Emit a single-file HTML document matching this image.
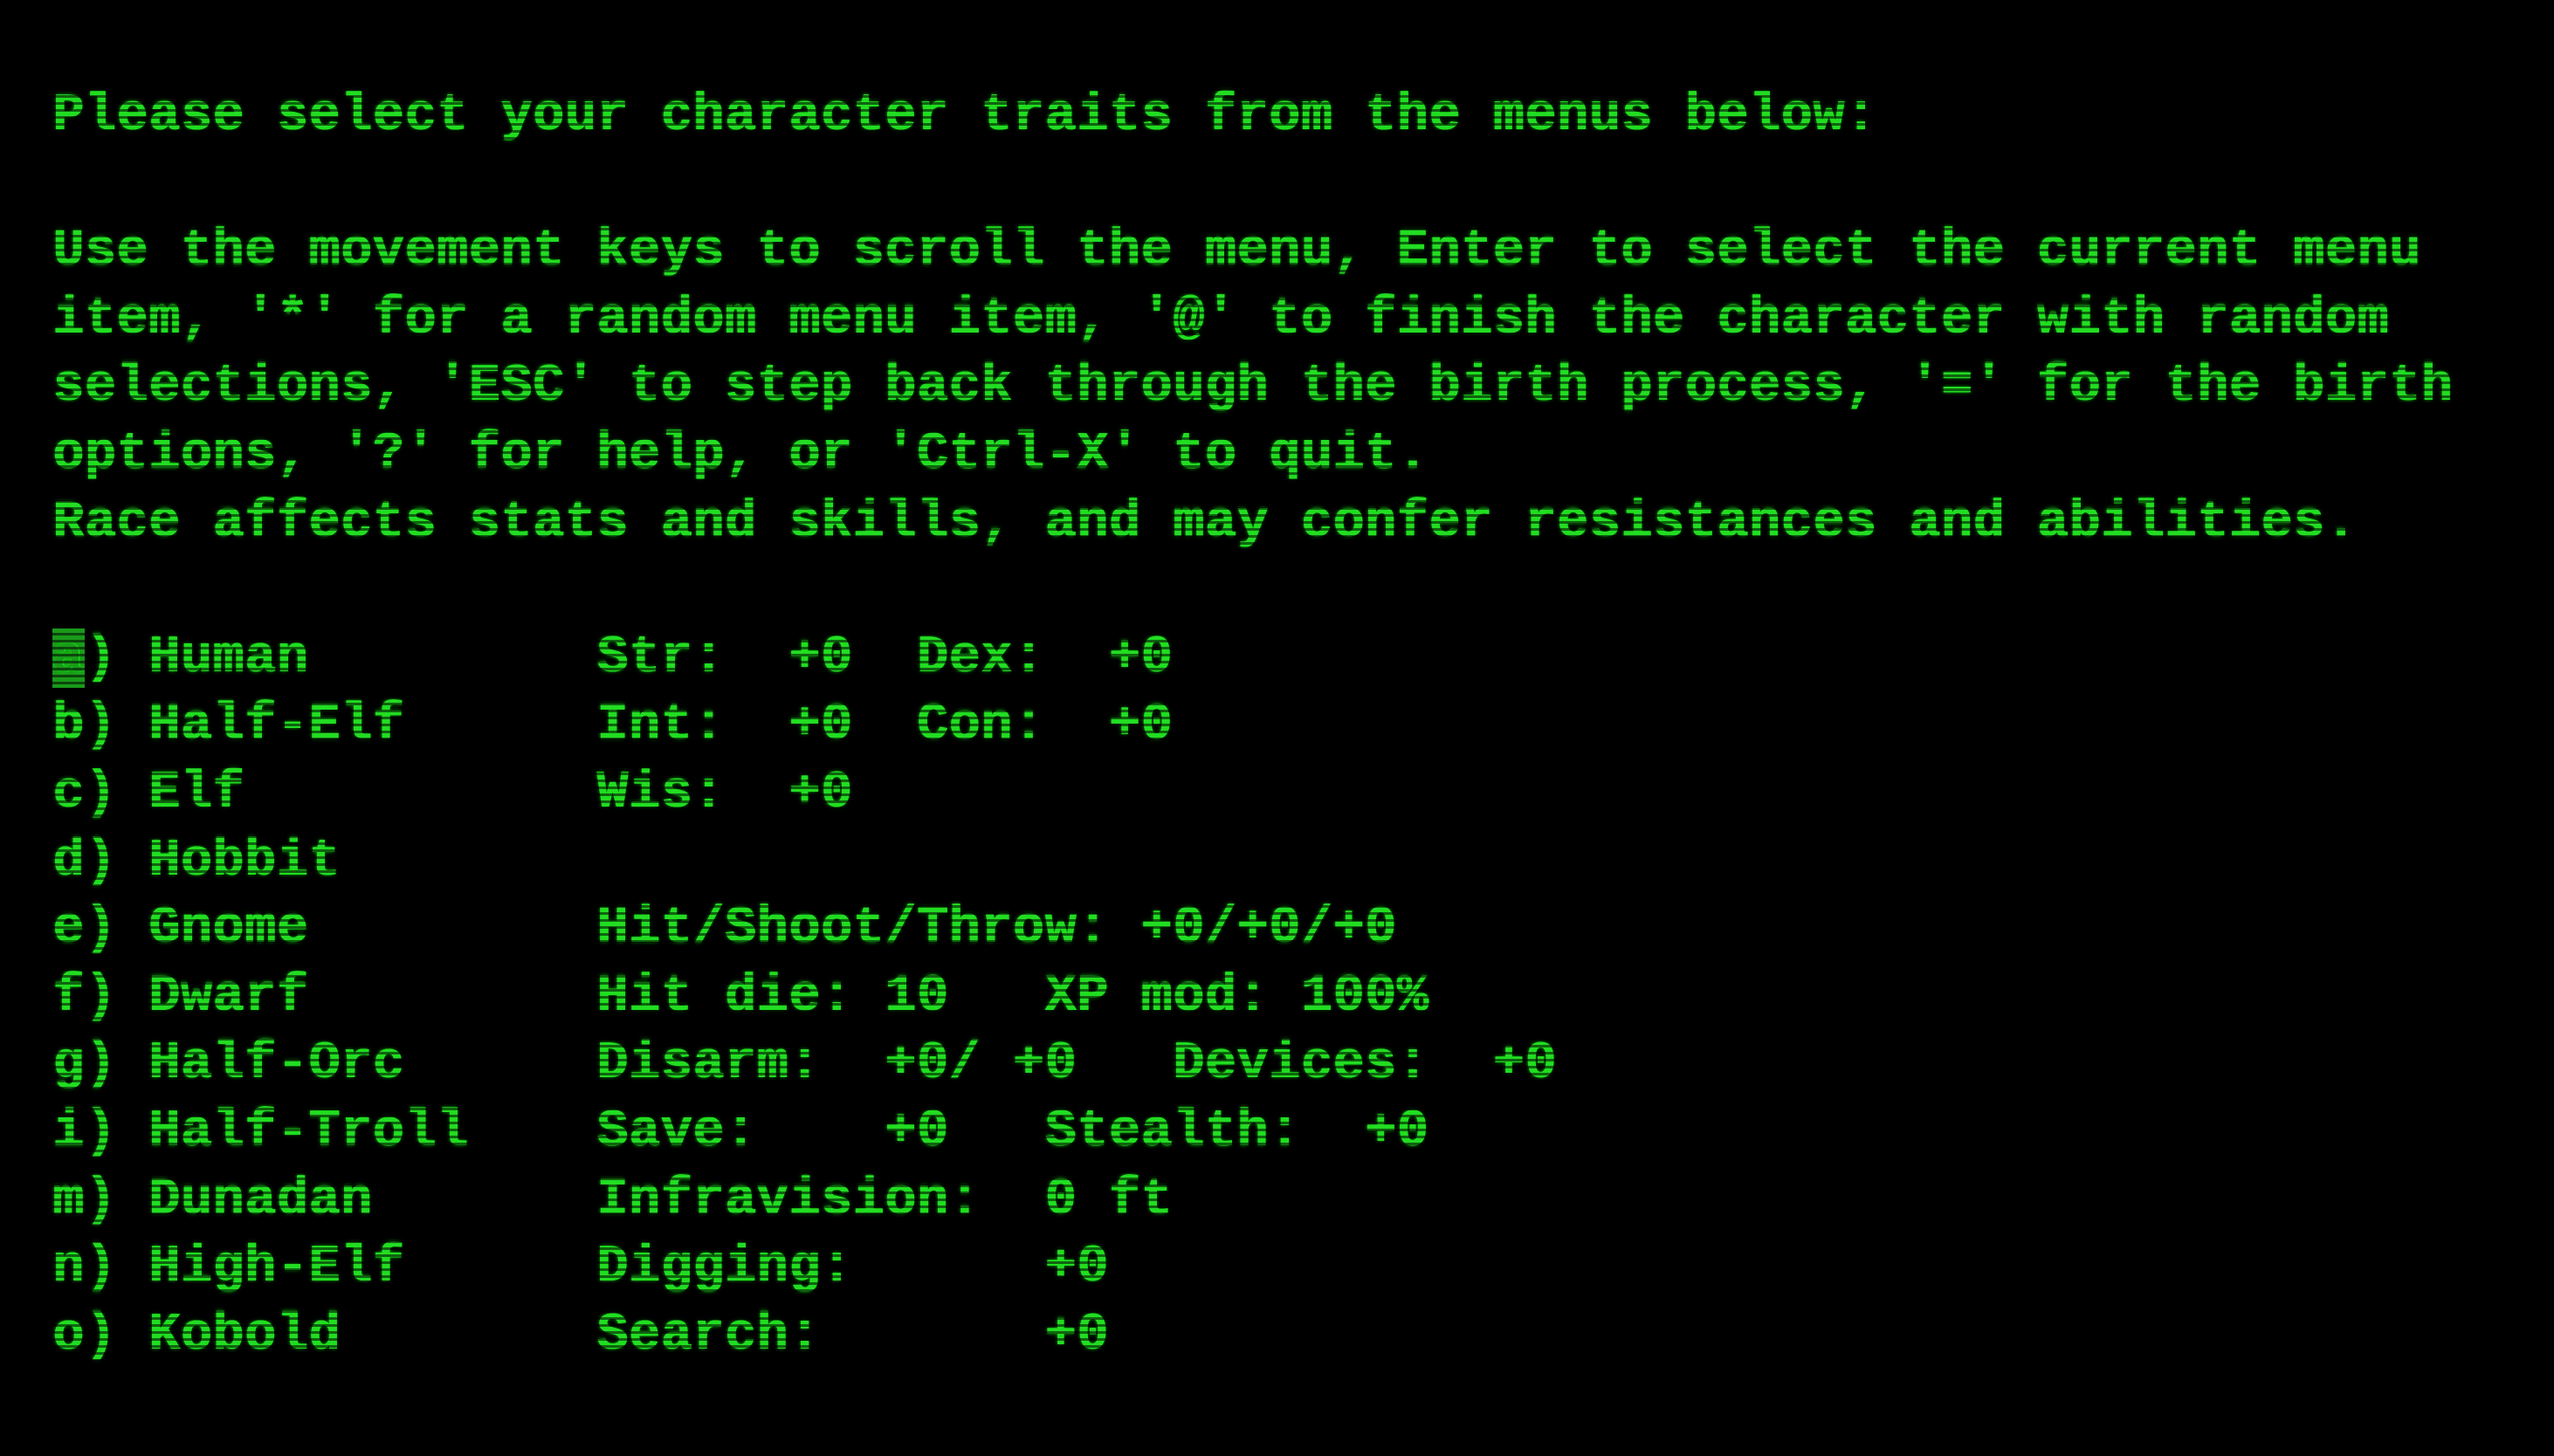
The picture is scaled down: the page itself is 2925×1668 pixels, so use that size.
<!DOCTYPE html>
<html><head><meta charset="utf-8"><style>
html,body{margin:0;padding:0;background:#000;}
body{width:2925px;height:1668px;overflow:hidden;position:relative;}
pre{position:absolute;left:60px;top:95px;margin:0;font-family:"Liberation Mono",monospace;font-weight:bold;font-size:60px;letter-spacing:0.65px;line-height:77.6px;color:#22dd22;text-shadow:0 0 4px rgba(0,255,0,0.6),1px 0 0 #22dd22;}
.cur{background:#1a9a1a;color:#1a9a1a;}
.sl{position:absolute;inset:0;background:repeating-linear-gradient(to bottom,rgba(0,0,0,0) 0px,rgba(0,0,0,0) 5px,rgba(0,0,0,0.55) 5px,rgba(0,0,0,0.55) 8px);pointer-events:none;}
</style></head><body>
<pre>Please select your character traits from the menus below:

Use the movement keys to scroll the menu, Enter to select the current menu
item, '*' for a random menu item, '@' to finish the character with random
selections, 'ESC' to step back through the birth process, '=' for the birth
options, '?' for help, or 'Ctrl-X' to quit.
Race affects stats and skills, and may confer resistances and abilities.

<span class="cur">a</span>) Human         Str:  +0  Dex:  +0
b) Half-Elf      Int:  +0  Con:  +0
c) Elf           Wis:  +0
d) Hobbit
e) Gnome         Hit/Shoot/Throw: +0/+0/+0
f) Dwarf         Hit die: 10   XP mod: 100%
g) Half-Orc      Disarm:  +0/ +0   Devices:  +0
i) Half-Troll    Save:    +0   Stealth:  +0
m) Dunadan       Infravision:  0 ft
n) High-Elf      Digging:      +0
o) Kobold        Search:       +0</pre>
<div class="sl"></div>
</body></html>
